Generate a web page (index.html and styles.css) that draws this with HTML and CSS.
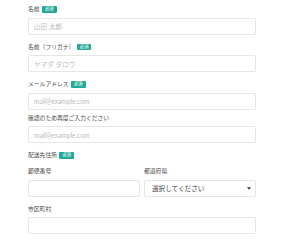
FILE: index.html
```html
<!DOCTYPE html>
<html lang="ja">
<head>
    <meta charset="UTF-8">
    <meta name="viewport" content="width=device-width, initial-scale=1.0">
    <title>ご注文フォーム</title>
    <link rel="stylesheet" href="styles.css">
</head>
<body>
    <form class="order-form">
        <div class="field">
            <label class="label">名前 <span class="badge">必須</span></label>
            <input type="text" class="input" placeholder="山田 太郎">
        </div>
        <div class="field">
            <label class="label">名前（フリガナ） <span class="badge">必須</span></label>
            <input type="text" class="input" placeholder="ヤマダ タロウ">
        </div>
        <div class="field">
            <label class="label">メールアドレス <span class="badge">必須</span></label>
            <input type="email" class="input" placeholder="mail@example.com">
        </div>
        <div class="field field-sub">
            <label class="label">確認のため再度ご入力ください</label>
            <input type="email" class="input" placeholder="mail@example.com">
        </div>
        <div class="field">
            <div class="label label-group">配送先住所 <span class="badge">必須</span></div>
            <div class="row">
                <div>
                    <label class="label">郵便番号</label>
                    <input type="text" class="input">
                </div>
                <div>
                    <label class="label">都道府県</label>
                    <div class="select-wrap">
                        <select class="input select">
                            <option>選択してください</option>
                        </select>
                        <svg class="arrow" width="4" height="3" viewBox="0 0 4 3"><path d="M0 0.3h4L2 2.8z" fill="#333"/></svg>
                    </div>
                </div>
            </div>
        </div>
        <div class="field">
            <label class="label">市区町村</label>
            <input type="text" class="input">
        </div>
    </form>
</body>
</html>
```

FILE: styles.css
```css
body {
    margin: 0;
    background: #fff;
    font-family: Lato, "Noto Sans CJK JP", sans-serif;
    color: #4a4a4a;
}
.order-form {
    width: 228px;
    margin-left: 28px;
    padding-top: 5px;
}
.field {
    margin-bottom: 8px;
}
.field-sub {
    margin-top: -4px;
}
.label {
    display: block;
    height: 8px;
    line-height: 8px;
    font-size: 5.8px;
    color: #4a4a4a;
    margin-bottom: 4.5px;
    white-space: nowrap;
}
.label-group {
    margin-bottom: 8px;
}
.badge {
    display: inline-block;
    vertical-align: top;
    margin-top: 1px;
    margin-left: 1px;
    height: 6.5px;
    line-height: 6.5px;
    padding: 0 3px;
    font-size: 4.3px;
    color: #fff;
    background: #1fa896;
    border-radius: 1px;
}
.input {
    display: block;
    box-sizing: border-box;
    width: 100%;
    height: 17px;
    margin: 0;
    padding: 0 5px;
    border: 1px solid #e6e6e6;
    border-radius: 2px;
    background: #fff;
    font-family: Lato, "Noto Sans CJK JP", sans-serif;
    font-size: 6.6px;
    color: #444;
    outline: none;
}
.input::placeholder {
    color: #bbb;
}
.row {
    display: grid;
    grid-template-columns: 1fr 1fr;
    gap: 4px;
}
.select-wrap {
    position: relative;
}
.select {
    appearance: none;
    -webkit-appearance: none;
    padding-left: 7px;
    color: #444;
}
.arrow {
    position: absolute;
    right: 5px;
    top: 7px;
}
```
